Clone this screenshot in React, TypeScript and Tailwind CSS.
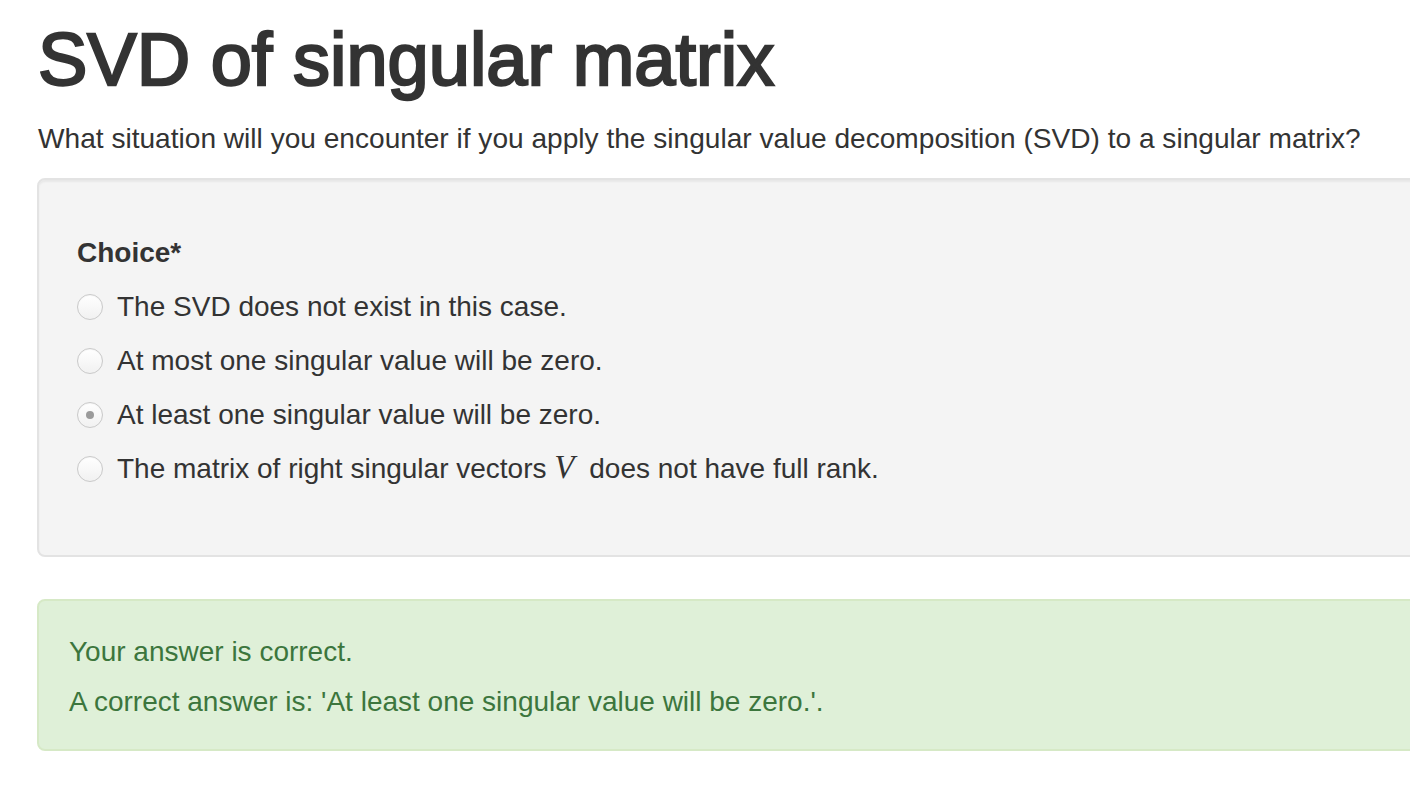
import React from 'react';

const CHOICES: { id: string; label: React.ReactNode; checked?: boolean }[] = [
  { id: 'a', label: 'The SVD does not exist in this case.' },
  { id: 'b', label: 'At most one singular value will be zero.' },
  { id: 'c', label: 'At least one singular value will be zero.', checked: true },
  {
    id: 'd',
    label: (
      <>
        The matrix of right singular vectors{' '}
        <span className="mr-[7px] font-['Liberation_Serif',serif] text-[33px] italic leading-none">V</span>
        {' '}does not have full rank.
      </>
    ),
  },
];

function Radio({ checked }: { checked?: boolean }) {
  return (
    <span className="flex h-[26px] w-[26px] shrink-0 items-center justify-center rounded-full border border-[#c9c9c9] bg-gradient-to-b from-white to-[#f1f1f1] shadow-[inset_0_1px_1px_rgba(0,0,0,0.04)]">
      {checked && <span className="h-[8px] w-[8px] rounded-full bg-[#9b9b9b]" />}
    </span>
  );
}

export default function App() {
  return (
    <div className="w-full overflow-hidden bg-white font-['Liberation_Sans',Arial,sans-serif] text-[#333]">
      <div className="w-[1480px] pl-[37px] pt-[19px] pb-[36px]">
        <h1 className="ps-px text-[74px] leading-[81px] [-webkit-text-stroke:2.4px_#333]">SVD of singular matrix</h1>
        <p className="mt-[19px] ps-px text-[28.1px] leading-[40px]">
          What situation will you encounter if you apply the singular value decomposition (SVD) to a singular matrix?
        </p>

        <div className="mt-[19px] rounded-[8px] border-2 border-[#e3e3e3] bg-[#f4f4f4] px-[38px] pt-[53px] pb-[52px] shadow-[inset_0_2px_2px_rgba(0,0,0,0.05)]">
          <p className="text-[28px] font-bold leading-[40px]">Choice*</p>
          <div className="mt-[14px] flex flex-col">
            {CHOICES.map((c) => (
              <label key={c.id} className="flex h-[54px] items-start gap-[14px] text-[28px] leading-[40px]">
                <span className="flex h-[40px] items-center">
                  <Radio checked={c.checked} />
                </span>
                <span>{c.label}</span>
              </label>
            ))}
          </div>
        </div>

        <div className="mt-[42px] rounded-[8px] border-2 border-[#d6e9c6] bg-[#dff0d8] px-[30px] pt-[31px] pb-[27px] text-[28px] leading-[40px] text-[#3c763d]">
          <p>Your answer is correct.</p>
          <p className="mt-[10px]">A correct answer is: 'At least one singular value will be zero.'.</p>
        </div>
      </div>
    </div>
  );
}
